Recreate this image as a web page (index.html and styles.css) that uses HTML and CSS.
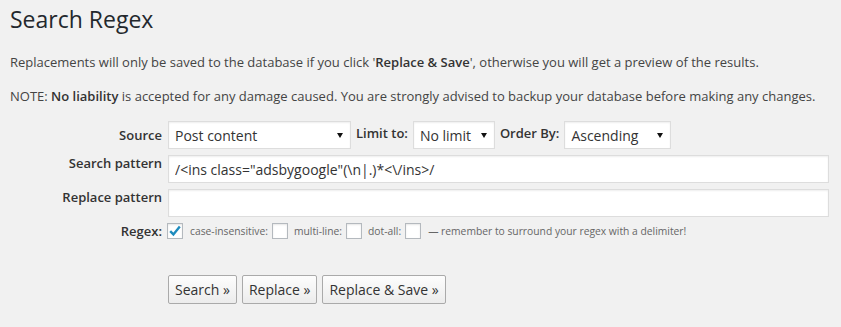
FILE: index.html
```html
<!DOCTYPE html>
<html lang="en">
<head>
  <meta charset="UTF-8">
  <title>Search Regex</title>
  <link rel="stylesheet" href="styles.css">
</head>
<body>
  <div class="wrap">
    <h1>Search Regex</h1>
    <p>Replacements will only be saved to the database if you click '<strong>Replace &amp; Save</strong>', otherwise you will get a preview of the results.</p>
    <p>NOTE: <strong>No liability</strong> is accepted for any damage caused. You are strongly advised to backup your database before making any changes.</p>

    <form class="search-form">
      <label class="field-label middle">Source</label>
      <div class="fields">
        <span class="select-wrap source"><select><option>Post content</option></select></span>
        <label class="inline-label">Limit to:</label>
        <span class="select-wrap limit"><select><option>No limit</option></select></span>
        <label class="inline-label">Order By:</label>
        <span class="select-wrap order"><select><option>Ascending</option></select></span>
      </div>

      <label class="field-label">Search pattern</label>
      <input class="text-input" type="text" value="/&lt;ins class=&quot;adsbygoogle&quot;(\n|.)*&lt;\/ins&gt;/">

      <label class="field-label">Replace pattern</label>
      <input class="text-input" type="text" value="">

      <label class="field-label middle">Regex:</label>
      <div class="fields regex-opts">
        <span class="check checked"><svg width="14" height="14" viewBox="0 0 14 14"><path d="M2.2 7.2 L5.4 10.4 L11.8 2.6" fill="none" stroke="#1e8cbe" stroke-width="2.4"/></svg></span>
        <span class="small-label">case-insensitive:</span>
        <span class="check"></span>
        <span class="small-label">multi-line:</span>
        <span class="check"></span>
        <span class="small-label">dot-all:</span>
        <span class="check"></span>
        <span class="small-label hint">— remember to surround your regex with a delimiter!</span>
      </div>

      <div class="buttons">
        <button type="button" class="btn">Search »</button>
        <button type="button" class="btn">Replace »</button>
        <button type="button" class="btn">Replace &amp; Save »</button>
      </div>
    </form>
  </div>
</body>
</html>
```

FILE: styles.css
```css
body {
  margin: 0;
  padding: 0;
  background-color: #f1f1f1;
  font-family: 'Open Sans', sans-serif;
  font-size: 13px;
  color: #444;
}
.wrap {
  padding: 5px 10px 0 10px;
}
h1 {
  margin: 0;
  font-size: 23px;
  font-weight: 400;
  line-height: 29px;
  color: #23282d;
}
p {
  margin: 14px 0 0 0;
  line-height: 20px;
}
h1 + p {
  margin-top: 18px;
}
strong {
  font-weight: 600;
  color: #333;
}
.search-form {
  display: grid;
  grid-template-columns: 152px 661px;
  column-gap: 6px;
  row-gap: 6px;
  margin-top: 15px;
}
.field-label {
  text-align: right;
  font-weight: 600;
  color: #333;
  line-height: 16px;
  align-self: start;
}
.field-label.middle {
  align-self: center;
}
.fields {
  display: flex;
  align-items: center;
  gap: 5px;
}
.inline-label {
  font-weight: 600;
  color: #333;
  margin-top: -4px;
}
.select-wrap {
  position: relative;
  display: inline-block;
}
.select-wrap::after {
  content: "";
  position: absolute;
  right: 8px;
  top: 12px;
  border-left: 3px solid transparent;
  border-right: 3px solid transparent;
  border-top: 5px solid #111;
}
select {
  -webkit-appearance: none;
  appearance: none;
  height: 28px;
  margin: 0;
  padding: 0 20px 0 6px;
  background: #fff;
  border: 1px solid #ddd;
  border-radius: 0;
  box-shadow: inset 0 1px 2px rgba(0, 0, 0, 0.07);
  font-family: 'Open Sans', sans-serif;
  font-size: 14px;
  color: #333;
}
.source select { width: 183px; }
.limit select { width: 82px; }
.order select { width: 107px; }
.text-input {
  box-sizing: border-box;
  width: 661px;
  height: 28px;
  margin: 0;
  padding: 0 6px;
  background: #fff;
  border: 1px solid #ddd;
  box-shadow: inset 0 1px 2px rgba(0, 0, 0, 0.07);
  font-family: 'Open Sans', sans-serif;
  font-size: 14px;
  color: #333;
  outline: none;
}
.regex-opts {
  gap: 0;
  height: 16px;
}
.check {
  box-sizing: border-box;
  display: inline-flex;
  align-items: center;
  justify-content: center;
  width: 16px;
  height: 16px;
  background: #fff;
  border: 1px solid #b4b9be;
  box-shadow: inset 0 1px 2px rgba(0, 0, 0, 0.1);
  margin-right: 6px;
}
.check.checked {
  margin-left: -1px;
  margin-right: 7px;
}
.small-label {
  font-size: 10.3px;
  color: #666;
  margin-right: 4px;
}
.small-label.hint {
  margin-left: 1px;
}
.buttons {
  grid-column: 2;
  display: flex;
  gap: 5px;
  margin-top: 30px;
}
.btn {
  height: 29px;
  margin: 0;
  padding: 0 6px 1px 6px;
  background: linear-gradient(#fdfdfd, #ececec);
  border: 1px solid #aaa;
  border-radius: 2px;
  font-family: 'Open Sans', sans-serif;
  font-size: 14px;
  color: #333;
}
```
